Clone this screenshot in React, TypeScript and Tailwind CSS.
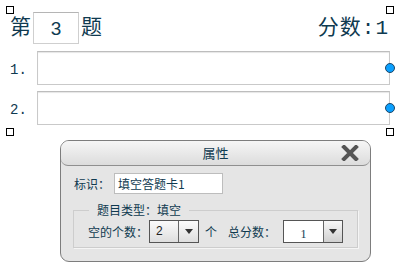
const ink = "text-[#0f3a50]"

function Handle({ className }: { className: string }) {
  return <div className={`absolute h-[8px] w-[8px] border border-black bg-white ${className}`} />
}

function Arrow() {
  return (
    <svg width="8" height="5" viewBox="0 0 8 5">
      <path d="M0 0 H8 L4 5 Z" fill="#333" />
    </svg>
  )
}

function AnswerRow({ n }: { n: number }) {
  return (
    <div className="flex items-center">
      <span className={`w-[37px] shrink-0 pl-[10px] pt-[4px] font-['Liberation_Mono',monospace] text-[14px] ${ink}`}>{n}.</span>
      <div className="relative mr-[10px] h-[34px] flex-1 border border-[#c9c9c9] border-t-[#bdbdbd] bg-white shadow-[inset_0_1px_1px_#e6e6e6]">
        <span className="absolute right-[-6px] top-[11px] h-[10px] w-[10px] rounded-full border border-[#1d4666] bg-[#0aa0ff]" />
      </div>
    </div>
  )
}

export default function App() {
  const cjk = "font-['Noto_Sans_CJK_SC',sans-serif]"
  return (
    <div className="relative h-[270px] w-[400px] overflow-hidden bg-white">
      <Handle className="left-[6px] top-[6px]" />
      <Handle className="left-[386px] top-[6px]" />
      <Handle className="left-[6px] top-[128px]" />
      <Handle className="left-[386px] top-[128px]" />

      <div className="flex items-center justify-between pl-[10px] pr-[11px] pt-[12px]">
        <div className={`flex items-center gap-[2px] font-['Liberation_Mono','Noto_Sans_CJK_SC',monospace] text-[21px] leading-none ${ink}`}>
          <span>第</span>
          <div className="flex h-[32px] w-[46px] items-center justify-center border border-[#cfcfcf] border-t-[#b5b5b5] bg-white font-['Liberation_Sans',sans-serif] text-[19px]">
            3
          </div>
          <span>题</span>
        </div>
        <span className={`font-['Liberation_Mono','Noto_Sans_CJK_SC',monospace] text-[21px] leading-none tracking-[1px] ${ink}`}>分数:1</span>
      </div>

      <div className="mt-[7px] flex flex-col gap-[6px]">
        <AnswerRow n={1} />
        <AnswerRow n={2} />
      </div>

      <div className={`ml-[60px] mt-[15px] flex h-[122px] w-[311px] flex-col rounded-[9px] border border-[#7d7d7d] bg-[#e5e5e5] ${cjk} text-[12px] ${ink}`}>
        <div className="relative flex h-[25px] shrink-0 items-center justify-center rounded-t-[8px] rounded-b-[7px] border-b border-[#8f8f8f] bg-gradient-to-b from-[#f6f6f6] to-[#dcdcdc]">
          <span className="text-[13px]">属性</span>
          <svg className="absolute right-[11px] top-[4px]" width="18" height="16" viewBox="0 0 18 16">
            <path d="M3 2 L15 14 M15 2 L3 14" stroke="#555" strokeWidth="4" strokeLinecap="square" />
          </svg>
        </div>

        <div className="flex items-center pl-[13px] pt-[7px]">
          <span className="w-[40px]">标识：</span>
          <div className="flex h-[21px] w-[109px] items-center border border-[#bdbdbd] bg-white pl-[3px]">填空答题卡1</div>
        </div>

        <fieldset className="mx-[12px] mt-[9px] h-[45px] border border-[#cdcdcd] shadow-[1px_1px_0_#f5f5f5] pl-[14px]">
          <legend className="ml-[1px] px-[8px] leading-[14px]">题目类型：填空</legend>
          <div className="flex items-center pt-[3px]">
            <span className="w-[61px]">空的个数：</span>
            <div className="flex h-[23px] w-[50px] border border-[#555] bg-gradient-to-b from-[#fbfbfb] to-[#dedede]">
              <span className="flex-1 pl-[6px] font-['Liberation_Sans',sans-serif] text-[12px] leading-[21px] text-[#222]">2</span>
              <span className="flex w-[20px] items-center justify-center border-l border-[#666]">
                <Arrow />
              </span>
            </div>
            <span className="ml-[6px]">个</span>
            <span className="ml-[11px] w-[55px]">总分数：</span>
            <div className="flex h-[23px] w-[60px] border border-[#555] bg-white">
              <span className="flex-1 pt-[5px] text-center font-['Liberation_Serif',serif] text-[12px] leading-[16px]">1</span>
              <span className="flex w-[19px] items-center justify-center border-l border-[#666] bg-gradient-to-b from-[#f8f8f8] to-[#d0d0d0]">
                <Arrow />
              </span>
            </div>
          </div>
        </fieldset>
      </div>
    </div>
  )
}
